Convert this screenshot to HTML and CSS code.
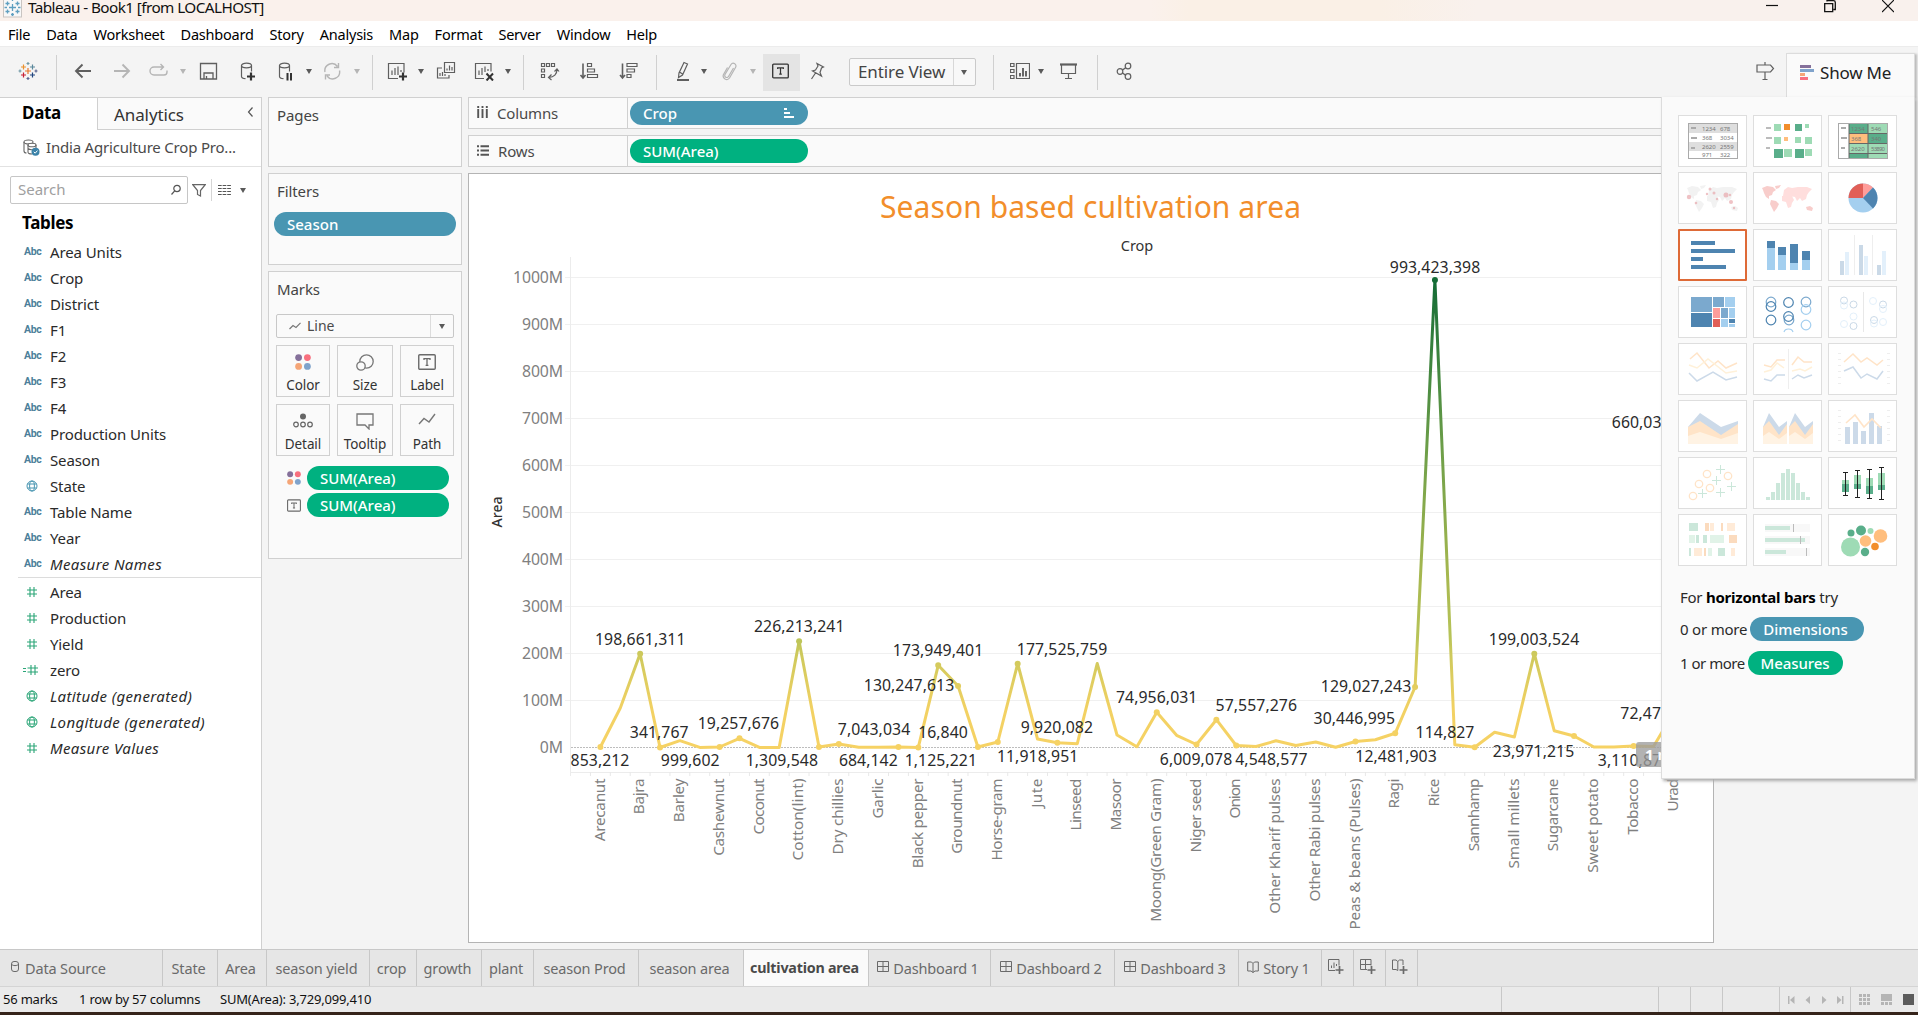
FILE: index.html
```html
<!DOCTYPE html>
<html lang="en">
<head>
<meta charset="utf-8">
<title>Tableau - Book1</title>
<link rel="stylesheet" href="styles.css">
</head>
<body>
<svg class="defs" width="0" height="0">
  <symbol id="caret" viewBox="0 0 8 20"><path d="M1 8h6l-3 5z" fill="currentColor"/></symbol>
  <symbol id="globe" viewBox="0 0 12 12"><g fill="none" stroke="currentColor"><circle cx="6" cy="6" r="5"/><ellipse cx="6" cy="6" rx="2.4" ry="5"/><path d="M1.5 4h9M1.5 8h9"/></g></symbol>
  <symbol id="hash" viewBox="0 0 12 12"><path d="M4 1v10M8 1v10M1 4h10M1 8h10" stroke="currentColor" stroke-width="1.1"/></symbol>
  <symbol id="dots4" viewBox="0 0 16 16"><circle cx="3.6" cy="3.6" r="3.4" fill="#85709a"/><circle cx="12.4" cy="3.6" r="3.4" fill="#f8707f"/><circle cx="3.6" cy="12.4" r="3.4" fill="#f5a577"/><circle cx="12.4" cy="12.4" r="3.4" fill="#80a3cb"/></symbol>
  <symbol id="tbox" viewBox="0 0 18 16"><rect x=".75" y=".75" width="16.5" height="14.5" rx="1" fill="none" stroke="currentColor" stroke-width="1.4"/><path d="M6 6V4.7h6V6M9 4.7v6.6M7.6 11.3h2.8" fill="none" stroke="currentColor" stroke-width="1.3"/></symbol>
  <symbol id="grid4" viewBox="0 0 12 12"><path d="M.5 .5h11v10h-11zM6 .5v10M.5 5.5h11" fill="none" stroke="currentColor"/></symbol>
  <symbol id="book" viewBox="0 0 12 12"><path d="M6 2.5L4.5 1H.7v9H4L6 11.5 8 10h3.300V1H7.500L6 2.500v9" fill="none" stroke="currentColor"/></symbol>
</svg>

<header class="titlebar">
  <svg class="appicon" width="20" height="20" viewBox="0 0 20 20"><rect x=".5" y="-3" width="18" height="20" fill="#f8f8f8" stroke="#c9c5c2"/><path d="M9.500 4v7M6 7.500h7M4.500 1.500v4M2.500 3.500h4M14.500 1.500v4M12.500 3.500h4M4.500 9.500v4M2.500 11.500h4M14.500 9.500v4M12.500 11.500h4M9.500 13v3M8 14.500h3M9.500-1v2M1.500 7.500h2.500M15 7.500h2.500" stroke="#5f9fc0" stroke-width="1.300"/></svg>
  <span class="wintitle">Tableau - Book1 [from LOCALHOST]</span>
  <div class="wincontrols">
    <svg width="12" height="14" viewBox="0 0 12 14"><path d="M0 5.500h12" stroke="#111" stroke-width="1.200"/></svg>
    <svg width="12" height="14" viewBox="0 0 12 14"><path d="M.7 3.700h8v8h-8zM3 1.500V.7h6.500a1.800 1.800 0 0 1 1.800 1.800V9.500H9.500" fill="none" stroke="#111" stroke-width="1.300"/></svg>
    <svg width="12" height="14" viewBox="0 0 12 14"><path d="M0 0l12 12M12 0L0 12" stroke="#111" stroke-width="1.200"/></svg>
  </div>
</header>

<nav class="menubar"><span>File</span><span>Data</span><span>Worksheet</span><span>Dashboard</span><span>Story</span><span>Analysis</span><span>Map</span><span>Format</span><span>Server</span><span>Window</span><span>Help</span></nav>

<div class="toolbar">
  <svg class="ic" viewBox="0 0 20 20" stroke-width="1.500"><path d="M10 7v6M7 10h6" stroke="#e8762c"/><path d="M5.500 3.500v5M3 6h5" stroke="#eb912c"/><path d="M14.500 3.500v5M12 6h5" stroke="#59879b"/><path d="M5.500 11.500v5M3 14h5" stroke="#c72035"/><path d="M14.500 11.500v5M12 14h5" stroke="#1f447e"/><path d="M10 1v3M8.500 2.500h3" stroke="#7199a6"/><path d="M10 16v3M8.500 17.500h3" stroke="#5b6591"/><path d="M2 8.500v3M.5 10h3" stroke="#7199a6"/><path d="M18 8.500v3M16.500 10h3" stroke="#5b6591"/></svg>
  <i class="sep g18"></i>
  <svg class="ic g16" viewBox="0 0 20 20"><path d="M18 10H3M9.500 3.500L3 10l6.500 6.500" stroke-width="1.900"/></svg>
  <svg class="ic g19 off" viewBox="0 0 20 20"><path d="M2 10h15M10.500 3.500L17 10l-6.500 6.500" stroke-width="1.900"/></svg>
  <svg class="ic g17 off" viewBox="0 0 20 20"><path d="M14 6H5a3.800 3.800 0 0 0 0 8h10a3 3 0 0 0 3-3V9.500M11.500 3l3 3-3 3" stroke-width="1.400"/></svg>
  <svg class="caret g10 off"><use href="#caret"/></svg>
  <svg class="ic g11" viewBox="0 0 20 20"><path d="M2.500 2.500h16v15.500h-16zM6 18v-6h9v6M8.500 18v-3" stroke-width="1.300"/></svg>
  <svg class="ic g20" viewBox="0 0 20 20"><ellipse cx="8.500" cy="4.500" rx="5" ry="2.300"/><path d="M3.500 4.500v11c0 1 1.500 2 4 2.200M13.500 4.500v6"/><path d="M13 11.500v8M9 15.500h8" stroke="#333" stroke-width="2.200"/></svg>
  <svg class="ic g17" viewBox="0 0 20 20"><ellipse cx="9.500" cy="4.500" rx="5" ry="2.300"/><path d="M4.500 4.500v11c0 1 1.500 2 4 2.200M14.500 4.500v6"/><path d="M12.500 12v7.500M16 12v7.500" stroke="#333" stroke-width="2"/></svg>
  <svg class="caret g10"><use href="#caret"/></svg>
  <svg class="ic g9 off" viewBox="0 0 20 20"><path d="M3 11a7 7 0 0 1 12.500-5.500M17.500 9.500A7 7 0 0 1 5 15M16.500 2v4.500H12M3.500 18.500V14H8" stroke-width="1.400"/></svg>
  <svg class="caret g11 off"><use href="#caret"/></svg>
  <i class="sep g11"></i>
  <svg class="ic g14" viewBox="0 0 20 20"><path d="M11 17.500H1.500v-15H17v9M5 14V9.500M8 14V7M11 14V5.500M14 11V9"/><path d="M16 11.500v8M12 15.500h8" stroke="#333" stroke-width="2.200"/></svg>
  <svg class="caret g10"><use href="#caret"/></svg>
  <svg class="ic g11" viewBox="0 0 20 20"><path d="M8.500 1.500h10v10h-10zM11 9.500V7.500M13.500 9.500V4.500M16 9.500V6M6 7H1.500v10H13v-3M4 15v-3M6.500 15v-4M9 15v-2"/></svg>
  <svg class="ic g18" viewBox="0 0 20 20"><path d="M10 17.500H1.500v-15H17v8M5 14V9.500M8 14V7M11 11V5.500M14 10V8"/><path d="M12.500 12.500l6.500 7M19 12.500l-6.500 7" stroke="#333" stroke-width="2"/></svg>
  <svg class="caret g10"><use href="#caret"/></svg>
  <i class="sep g11"></i>
  <svg class="ic g16" viewBox="0 0 20 20"><path d="M1.500 2.500h3v3h-3zM6.500 2.500h3v3h-3zM11.500 2.500h3v3h-3zM1.500 8h3v3h-3zM1.500 13.500h3v3h-3zM17 8.500c0 4.500-3 8-8 8M14.500 10.500l2.500-2.500 2 2.500M11.500 13.500l-3 3 3 2.500"/></svg>
  <svg class="ic g19" viewBox="0 0 20 20"><path d="M4 2.500V17M1.500 14L4 17l2.500-3" stroke-width="1.600"/><path d="M8.500 2.500h4v3h-4zM8.500 8h7v3h-7zM8.500 13.500h10v3h-10z"/></svg>
  <svg class="ic g20" viewBox="0 0 20 20"><path d="M3.500 2.500V17M1 14l2.500 3L6 14" stroke-width="1.600"/><path d="M8 2.500h10v3H8zM8 8h7.500v3H8zM8 13.500h4v3H8z"/></svg>
  <i class="sep g17"></i>
  <svg class="ic g16" viewBox="0 0 20 20"><path d="M11 1.500l3.500 1.500-5 11-4 2.500.5-4.500zM6.500 11l3 2"/><path d="M4 19h12" stroke-width="2"/></svg>
  <svg class="caret g7"><use href="#caret"/></svg>
  <svg class="ic g11 off" viewBox="0 0 20 20"><path d="M14.500 7l-5 8.500a2 2 0 0 1-3.500-2l6-10a2.700 2.700 0 0 1 4.500 3l-6 10.500a3.500 3.500 0 0 1-6-3.500l4-7"/></svg>
  <svg class="caret g10 off"><use href="#caret"/></svg>
  <span class="pressed g6"><svg width="17" height="16"><use href="#tbox"/></svg></span>
  <svg class="ic g7" viewBox="0 0 20 20"><path d="M10 2.500l6.500 3.500-2 1-1.500 4.500 1.500 3.500-9-5 3-1 2.500-4zM8.500 12L4.500 18"/></svg>
  <div class="combo g22"><span>Entire View</span><b><svg class="caret"><use href="#caret"/></svg></b></div>
  <i class="sep g17"></i>
  <svg class="ic g16" viewBox="0 0 20 20"><path d="M.5 2.500h3.500v3H.5zM.5 8.500h3.500v3H.5zM.5 14.500h3.500v3H.5zM6.500 2.500h13v15h-13z"/><path d="M10 15.500v-3.500M13 15.500V7M16 15.500V10" stroke-width="1.900"/></svg>
  <svg class="caret g7"><use href="#caret"/></svg>
  <svg class="ic g13" viewBox="0 0 20 20"><path d="M2 3.500h17" stroke-width="2.200"/><path d="M3.500 4v8.500h14V4M10.500 12.500v5M7 17.500h7"/></svg>
  <i class="sep g19"></i>
  <svg class="ic g16" viewBox="0 0 20 20"><circle cx="6" cy="10.500" r="2.800"/><circle cx="14" cy="5" r="2.800"/><circle cx="14" cy="15.500" r="2.800"/><path d="M8.500 9L12 6.500M8.500 12l3.500 2.500" stroke-width="1.500"/></svg>
  <svg class="ic guide" viewBox="0 0 20 20"><path d="M10 1v3M2 4h13.500l3 3.500-3 3.500H2zM10 11v7.500M7.500 18.500h5"/></svg>
  <div class="showtab">
    <svg width="15" height="16" viewBox="0 0 15 16"><path d="M0 0h11v3H0z" fill="#85709a"/><path d="M0 4h14v3H0z" fill="#80a3cb"/><path d="M0 8h5v3H0z" fill="#f5a577"/><path d="M0 12h8v3H0z" fill="#f8707f"/></svg>
    <span>Show Me</span>
  </div>
</div>

<main class="main">
  <aside class="sidebar">
    <div class="tabs"><b>Data</b><span>Analytics<svg width="7" height="10" viewBox="0 0 7 10"><path d="M5.500 .5L1.500 5l4 4.500" fill="none" stroke="#555" stroke-width="1.200"/></svg></span></div>
    <div class="source"><svg width="17" height="17" viewBox="0 0 17 17"><g fill="none" stroke="#666" stroke-width="1.100"><ellipse cx="5.500" cy="3" rx="4.500" ry="2"/><path d="M1 3v9c0 1 1 2 2.500 2"/><ellipse cx="9" cy="6" rx="4" ry="1.800" fill="#fff"/><path d="M5 6v7c0 1 1.500 2 4 2M13 6v3M5 9.500c1 1 3 1.500 5 1.200"/></g><circle cx="12.500" cy="12.800" r="4" fill="#3b82a8"/><path d="M10.800 12.800l1.400 1.400 2.200-2.600" fill="none" stroke="#fff"/></svg><span>India Agriculture Crop Pro...</span></div>
    <div class="searchrow">
      <div class="search"><span>Search</span><svg width="12" height="12" viewBox="0 0 12 12"><g fill="none" stroke="#555" stroke-width="1.200"><circle cx="7" cy="4.500" r="3.200"/><path d="M4.700 6.800L1.500 10.500"/></g></svg></div>
      <svg width="14" height="13" viewBox="0 0 14 13"><path d="M.8 .7h12.400L8.500 6.500v5.500l-3-1.500v-4z" fill="none" stroke="#666" stroke-width="1.200"/></svg>
      <i></i>
      <svg width="13" height="11" viewBox="0 0 13 11"><path d="M0 .5h13M0 3.500h13M0 6.500h13M0 9.500h13" stroke="#555" stroke-width="1.200" stroke-dasharray="3.700 .9"/></svg>
      <svg class="caret"><use href="#caret"/></svg>
    </div>
    <h2 class="tables">Tables</h2>
    <ul class="fields dim">
      <li><em>Abc</em>Area Units</li><li><em>Abc</em>Crop</li><li><em>Abc</em>District</li><li><em>Abc</em>F1</li><li><em>Abc</em>F2</li><li><em>Abc</em>F3</li><li><em>Abc</em>F4</li><li><em>Abc</em>Production Units</li><li><em>Abc</em>Season</li><li><em><svg width="12" height="12"><use href="#globe"/></svg></em>State</li><li><em>Abc</em>Table Name</li><li><em>Abc</em>Year</li><li class="gen"><em>Abc</em>Measure Names</li>
    </ul>
    <ul class="fields mea">
      <li><em><svg width="12" height="12"><use href="#hash"/></svg></em>Area</li><li><em><svg width="12" height="12"><use href="#hash"/></svg></em>Production</li><li><em><svg width="12" height="12"><use href="#hash"/></svg></em>Yield</li><li><em class="calc"><svg width="16" height="12" viewBox="0 0 16 12"><path d="M0 4.500h3M0 7.500h3M8 1v10M12 1v10M4.500 4H15M4.500 8H15" stroke="currentColor" stroke-width="1.100"/></svg></em>zero</li><li class="gen"><em><svg width="12" height="12"><use href="#globe"/></svg></em>Latitude (generated)</li><li class="gen"><em><svg width="12" height="12"><use href="#globe"/></svg></em>Longitude (generated)</li><li class="gen"><em><svg width="12" height="12"><use href="#hash"/></svg></em>Measure Values</li>
    </ul>
  </aside>

  <section class="cards">
    <div class="card pages"><h3>Pages</h3></div>
    <div class="card filters"><h3>Filters</h3><div class="pill blue">Season</div></div>
    <div class="card marks"><h3>Marks</h3>
      <div class="marktype"><svg width="12" height="8" viewBox="0 0 12 8"><path d="M.5 7l3.500-3.500 3 2L11.500 .8" fill="none" stroke="#777" stroke-width="1.200"/></svg><span>Line</span><b><svg class="caret"><use href="#caret"/></svg></b></div>
      <div class="markgrid">
        <div><svg width="16" height="16"><use href="#dots4"/></svg>Color</div>
        <div><svg width="18" height="17" viewBox="0 0 18 17"><g fill="none" stroke="#777" stroke-width="1.300"><circle cx="10.500" cy="7.500" r="6.700"/><circle cx="5" cy="12" r="4.200" fill="#fafafa"/></g></svg>Size</div>
        <div><svg class="dk" width="18" height="16"><use href="#tbox"/></svg>Label</div>
        <div><svg width="20" height="15" viewBox="0 0 20 15"><circle cx="10" cy="3.500" r="3" fill="#666"/><g fill="none" stroke="#666" stroke-width="1.200"><circle cx="3" cy="11.500" r="2.300"/><circle cx="10" cy="11.500" r="2.300"/><circle cx="17" cy="11.500" r="2.300"/></g></svg>Detail</div>
        <div><svg width="18" height="17" viewBox="0 0 18 17"><path d="M1 1h16v11h-4v4l-4-4H1z" fill="none" stroke="#777" stroke-width="1.300"/></svg>Tooltip</div>
        <div><svg width="18" height="13" viewBox="0 0 18 13"><path d="M1 11l5-5.500 5 3.500 6-8" fill="none" stroke="#777" stroke-width="1.400"/></svg>Path</div>
      </div>
      <div class="enc"><svg width="14" height="14"><use href="#dots4"/></svg><div class="pill green">SUM(Area)</div></div>
      <div class="enc"><svg class="dk" width="14" height="13"><use href="#tbox"/></svg><div class="pill green">SUM(Area)</div></div>
    </div>
  </section>

  <section class="work">
    <div class="shelf"><label><svg width="11" height="12" viewBox="0 0 11 12"><path d="M1.200 0v2M5.500 0v2M9.800 0v2M1.200 3v9M5.500 3v9M9.800 3v9" stroke="#555" stroke-width="1.900"/></svg>Columns</label><div class="pill blue">Crop<svg width="10" height="10" viewBox="0 0 10 10"><path d="M0 1h3M0 5h6M0 9h10" stroke="#fff" stroke-width="1.800"/></svg></div></div>
    <div class="shelf"><label><svg width="12" height="11" viewBox="0 0 12 11"><path d="M0 1.200h2M0 5.500h2M0 9.800h2M3.500 1.200H12M3.500 5.500H12M3.500 9.800H12" stroke="#555" stroke-width="1.900"/></svg>Rows</label><div class="pill green">SUM(Area)</div></div>
    <svg class="view" id="chart" width="1246" height="770" viewBox="468 173 1246 770">
      <defs><linearGradient id="areaScale" gradientUnits="userSpaceOnUse" x1="0" y1="747" x2="0" y2="280"><stop offset="0" stop-color="#f6d264"/><stop offset=".08" stop-color="#f2d163"/><stop offset=".2" stop-color="#cdc95c"/><stop offset=".24" stop-color="#b6c358"/><stop offset=".35" stop-color="#a9b950"/><stop offset=".65" stop-color="#6a9d48"/><stop offset="1" stop-color="#146c36"/></linearGradient></defs>
      <text class="ctitle" x="880" y="217.500" textLength="421">Season based cultivation area</text>
      <text class="chead" x="1137" y="251" text-anchor="middle">Crop</text>
      <text class="caxis" transform="translate(502 512) rotate(-90)" text-anchor="middle">Area</text>
    </svg>
  </section>

  <aside class="showme">
    <div class="thumbs">
      <svg viewBox="0 0 69 52"><rect x="10.500" y="8.500" width="49" height="35" fill="#fff" stroke="#aaa"/><path d="M11 9h48v9H11zM11 27h48v9H11z" fill="#dedede"/><path d="M13 13h5M13 23h6M13 33h4" stroke="#aaa" stroke-width="2"/><g class="tiny"><text x="24" y="16">1234</text><text x="42" y="16">678</text><text x="24" y="25">368</text><text x="42" y="25">3034</text><text x="24" y="34">2620</text><text x="42" y="34">2559</text><text x="24" y="42">971</text><text x="42" y="42">322</text></g></svg>
      <svg viewBox="0 0 69 52"><path d="M13 13h5M13 23h6M13 33h4" stroke="#bbb" stroke-width="2"/><path d="M21 9h7v7h-7zM52 9h4v4h-4zM21 22h7v7h-7zM42 22h6v6h-6zM52 22h7v7h-7zM31 34h8v8h-8zM52 34h7v7h-7z" fill="#9edbb5"/><path d="M42 9h7v7h-7zM21 34h9v9h-9zM42 34h9v9h-9z" fill="#59ae8a"/><path d="M31 9h6v6h-6z" fill="#f28e2b"/><path d="M31 22h4v4h-4z" fill="#ffbe7d"/></svg>
      <svg viewBox="0 0 69 52"><rect x="10.500" y="8.500" width="49" height="35" fill="#fff" stroke="#aaa"/><path d="M21 9h19v9H21zM40 18h19v10H40zM21 38h19v5H21z" fill="#59ae8a"/><path d="M40 9h19v9H40zM21 28h38v10H21zM40 38h19v5H40z" fill="#9edbb5"/><path d="M21 18h19v10H21z" fill="#ffbe7d"/><path d="M21 9v34M40 9v34M21 18.500h38M21 28.500h38M21 38.500h38" stroke="#666"/><path d="M13 13h5M13 23h6M13 33h4" stroke="#aaa" stroke-width="2"/><g class="tiny"><text x="23" y="15.500">1234</text><text x="43" y="15.500">546</text><text x="23" y="26">368</text><text x="43" y="26">340</text><text x="23" y="36">2620</text><text x="43" y="36" textLength="14">53890</text></g></svg>
      <svg viewBox="0 0 69 52"><path d="M9 16l5-2 6 1 3 3-3 2-1 3-3 1v3l-3-2-2-4-1-3zM22 14l6-1-2 3-3 1zM18 28l5 1 3 3-2 4-3 4-2-4-2-4zM29 24l5-1 5 1 2 4-2 3-1 4-3 1-2-6-4-1zM31 18l4-3 4 1 6-1 9 0 5 2-3 3-2 3-1 4-4 2-2-3-3 3-2-4-5-1-4 1-3-1zM53 35l4-1 3 2-1 3-5-1z" fill="#f2f2f2"/><g fill="#e9a9ad" opacity=".7"><circle cx="11" cy="25" r="2.200"/><circle cx="18" cy="31" r="1.300"/><circle cx="29" cy="22" r="1.200"/><circle cx="32" cy="17" r="1.500"/><circle cx="36" cy="21" r="1.500"/><circle cx="48" cy="23" r="2.500"/><circle cx="53" cy="30" r="2"/><circle cx="39" cy="27" r="1.200"/><circle cx="56" cy="36" r="1.200"/><circle cx="52" cy="23" r="1.200"/></g></svg>
      <svg viewBox="0 0 69 52"><path d="M9 16l5-2 6 1 3 3-3 2-1 3-3 1v3l-3-2-2-4-1-3zM22 14l6-1-2 3-3 1zM18 28l5 1 3 3-2 4-3 4-2-4-2-4zM53 35l4-1 3 2-1 3-5-1z" fill="#f8cdcb"/><path d="M29 24l5-1 5 1 2 4-2 3-1 4-3 1-2-6-4-1zM31 18l4-3 4 1 6-1 9 0 5 2-3 3-2 3-1 4-4 2-2-3-3 3-2-4-5-1-4 1-3-1z" fill="#ffdedd"/></svg>
      <svg viewBox="0 0 69 52"><circle cx="35" cy="26" r="14.500" fill="#a4cfef"/><path d="M35 26V11.500A14.500 14.500 0 0 0 20.500 26z" fill="#e15f57"/><path d="M35 26V11.500a14.500 14.500 0 0 1 10 4z" fill="#ff9d9a"/><path d="M35 26l10-10.500a14.500 14.500 0 0 1 0 21z" fill="#4e84b0"/></svg>
      <svg class="sel" viewBox="0 0 69 52"><path d="M13 12h24v4H13zM13 20h44v4H13zM13 28h12v4H13zM13 36h35v4H13z" fill="#4e84b0"/></svg>
      <svg viewBox="0 0 69 52"><path d="M14 19h8v22h-8zM25 26h8v15h-8zM37 34h8v7h-8zM49 31h8v10h-8z" fill="#a4cfef"/><path d="M14 12h8v7h-8zM25 18h8v8h-8zM37 15h8v19h-8zM49 22h8v9h-8z" fill="#4e84b0"/></svg>
      <svg viewBox="0 0 69 52"><path d="M26.500 6v40M44.500 6v40" stroke="#eee"/><path d="M12 32h4v14h-4zM31 16h4v30h-4zM49 36h4v10h-4z" fill="#cad9e7"/><path d="M17 23h4v23h-4zM36 27h4v19h-4zM54 22h4v24h-4z" fill="#e3f0fb"/></svg>
      <svg viewBox="0 0 69 52"><path d="M13 11h21v15H13zM35 11h11v10H35zM43 22h7v10h-7z" fill="#7ba9ce"/><path d="M13 27h21v14H13zM51 33h6v4h-6z" fill="#4e84b0"/><path d="M47 11h10v10H47zM51 22h6v10h-6zM43 33h7v8h-7zM51 38h6v3h-6z" fill="#a4cfef"/><path d="M35 22h7v10h-7z" fill="#ff9d9a"/><path d="M35 33h7v8h-7z" fill="#e15f57"/></svg>
      <svg viewBox="0 0 69 52" fill="none" stroke-width="1.200"><g stroke="#7ba9ce"><circle cx="18" cy="16" r="4.800"/><circle cx="36" cy="34" r="4.800"/><circle cx="53" cy="16" r="4.800"/></g><g stroke="#4e84b0"><circle cx="18" cy="20.500" r="4.800"/><circle cx="18" cy="34" r="4.800"/><circle cx="35.500" cy="16.500" r="4.800"/><circle cx="35.500" cy="30.500" r="4.800"/></g><g stroke="#a4cfef"><circle cx="53" cy="23.500" r="4.800"/><circle cx="53" cy="39" r="4.800"/><path d="M31 46c1-4 8-4 9 0"/></g></svg>
      <svg viewBox="0 0 69 52" fill="none"><path d="M35.500 6v40" stroke="#e8e8e8"/><g stroke="#cad9e7"><circle cx="16" cy="14.500" r="3.500"/><circle cx="25.500" cy="18.500" r="3.500"/><circle cx="25.500" cy="40" r="3.500"/><circle cx="55" cy="18.500" r="3.500"/><circle cx="46" cy="34" r="3.500"/></g><g stroke="#e3f0fb"><circle cx="16" cy="19.500" r="3.500"/><circle cx="25.500" cy="30.500" r="3.500"/><circle cx="16" cy="38" r="3.500"/><circle cx="45" cy="15" r="3.500"/><circle cx="55" cy="23" r="3.500"/><circle cx="46" cy="37.500" r="3.500"/><circle cx="55" cy="36" r="3.500"/></g></svg>
      <svg viewBox="0 0 69 52" fill="none" stroke-width="1.500"><path d="M12 16l7-6 12 15 9-7 8 7 11-5" stroke="#ffe4c8"/><path d="M11 22l8 3 11-9 18 14 11-2" stroke="#fff1d9"/><path d="M11 30l8 8 16-9 13 8 11-3" stroke="#ccdae9"/></svg>
      <svg viewBox="0 0 69 52" fill="none" stroke-width="1.500"><path d="M35.500 6v40" stroke="#eee" stroke-width="1"/><path d="M11 22l7 2 6-7h8M39 22l6-8 6 5h8" stroke="#ffe4c8"/><path d="M11 29l7-2 6-7 7 5M39 28l8-2 5 2 7-4" stroke="#fff1d9"/><path d="M11 36l7 2 6-6h8M39 36l6-4 6 3 8-3" stroke="#ccdae9"/></svg>
      <svg viewBox="0 0 69 52" fill="none" stroke-width="1.500"><path d="M11.500 10v34M60.500 10v34" stroke="#eee" stroke-width="3" stroke-dasharray="1 5"/><path d="M16 19l9-8 8 8 6-4 10 7 6-5" stroke="#ffe4c8"/><path d="M16 28l9-4 8 11 6-4 10 5 6-8" stroke="#ccdae9"/></svg>
      <svg viewBox="0 0 69 52"><path d="M10 27l12-14 21 14 17-6v23H10z" fill="#ccdae9"/><path d="M10 27l12-6 21 14 17-11v20H10z" fill="#ffe4c8"/><path d="M10 36l12-4 21 7 17-6v11H10z" fill="#fff3e4"/></svg>
      <svg viewBox="0 0 69 52"><path d="M10 27l6-14 10 14 8-6v23H10zM36 27l6-14 10 14 8-6v23H36z" fill="#ccdae9"/><path d="M10 27l6-6 10 14 8-11v20H10zM36 27l6-6 10 14 8-11v20H36z" fill="#ffe4c8"/><path d="M10 36l6-4 10 7 8-6v11H10zM36 36l6-4 10 7 8-6v11H36z" fill="#fff3e4"/></svg>
      <svg viewBox="0 0 69 52" fill="none"><path d="M11.500 10v34M60.500 10v34" stroke="#eee" stroke-width="3" stroke-dasharray="1 5"/><path d="M17 27h5v17h-5zM25 22h5v22h-5zM33 31h5v13h-5zM41 13h5v31h-5zM49 26h5v18h-5z" fill="#ccdae9"/><path d="M18 23l9-8 9 12 8-8 9 9" stroke="#ffe4c8" stroke-width="1.600"/></svg>
      <svg viewBox="0 0 69 52" fill="none"><g stroke="#ffe4c8" stroke-width="1.300"><circle cx="15" cy="39" r="3.700"/><circle cx="21" cy="27" r="3.700"/><circle cx="29" cy="17" r="3.700"/><circle cx="32" cy="31" r="3.700"/><circle cx="50" cy="19" r="3.700"/></g><path d="M42.500 8v9M38 12.500h9M38.500 19v9M34 23.500h9M53.500 25v9M49 29.500h9M42.500 31v9M38 35.500h9M24.500 32v9M20 36.500h9" stroke="#cbe7da"/></svg>
      <svg viewBox="0 0 69 52"><path d="M13 40h4v3h-4zM18 35h4v8h-4zM23 26h4v17h-4zM28 16h4v27h-4zM33 12h4v31h-4zM38 16h4v27h-4zM43 26h4v17h-4zM48 35h4v8h-4zM53 40h4v3h-4z" fill="#cbe7da"/></svg>
      <svg viewBox="0 0 69 52"><path d="M14 23h7v4h-7zM26 18h7v9h-7zM38 21h7v8h-7zM50 16h7v12h-7z" fill="#9edbb5"/><path d="M14 27h7v8h-7zM26 27h7v5h-7zM38 29h7v8h-7zM50 28h7v5h-7z" fill="#59ae8a"/><path d="M17.500 15v24M15 15.500h5M15 38.500h5M29.500 13v27M27 13.500h5M27 40.500h5M41.500 12v30M39 12.500h5M39 41.500h5M53.500 10v32M51 10.500h5M51 42.500h5" stroke="#222"/></svg>
      <svg viewBox="0 0 69 52"><path d="M11 9h9v8h-9zM18 21h3v8h-3zM25 21h4v8h-4zM11 34h2v8h-2zM40 34h7v8h-7z" fill="#cbe7da"/><path d="M11 21h6v8h-6zM32 21h14v8H32zM30 34h4v8h-4z" fill="#e1f3e8"/><path d="M27 9h4v8h-4zM43 9h2v8h-2zM51 21h8v8h-8zM26 34h2v8h-2z" fill="#fbdbbe"/><path d="M32 9h4v8h-4zM49 9h8v8h-8zM16 34h8v8h-8zM53 34h4v8h-4z" fill="#ffebd8"/></svg>
      <svg viewBox="0 0 69 52"><path d="M12 10h45v8H12zM12 22h45v8H12zM12 34h45v8H12z" fill="#f8f8f8"/><path d="M12 12h25v4H12zM12 24h40v4H12zM12 36h21v4H12z" fill="#cbe7da"/><path d="M40.500 10v8M47.500 22v8M53.500 34v8" stroke="#bbb"/></svg>
      <svg viewBox="0 0 69 52"><g fill="#9edbb5"><circle cx="22.500" cy="33" r="9.500"/><circle cx="42.500" cy="17" r="3"/></g><g fill="#59ae8a"><circle cx="23" cy="19" r="3.500"/><circle cx="33" cy="16.500" r="5"/><circle cx="37" cy="38" r="4.200"/></g><g fill="#ffbe7d"><circle cx="52.500" cy="22" r="6.800"/><circle cx="37.500" cy="27" r="5.800"/></g><circle cx="47" cy="32.500" r="3.800" fill="#f28e2b"/></svg>
    </div>
    <p class="hint">For <b>horizontal bars</b> try</p>
    <p class="req">0 or more <span class="pill blue">Dimensions</span></p>
    <p class="req two">1 or more <span class="pill green">Measures</span></p>
  </aside>
</main>

<nav class="sheets">
  <span class="t162 ds"><svg width="10" height="12" viewBox="0 0 10 12"><g fill="none" stroke="currentColor"><rect x="1.500" y=".5" width="7" height="10" rx="2.500"/><path d="M1.500 3.500c2 1.500 5 1.500 7 0"/></g></svg>Data Source</span><span class="t55">State</span><span class="t50">Area</span><span class="t102">season yield</span><span class="t47">crop</span><span class="t65">growth</span><span class="t52">plant</span><span class="t105">season Prod</span><span class="t105">season area</span><span class="t125 active">cultivation area</span><span class="t123"><svg width="12" height="12"><use href="#grid4"/></svg>Dashboard 1</span><span class="t124"><svg width="12" height="12"><use href="#grid4"/></svg>Dashboard 2</span><span class="t124"><svg width="12" height="12"><use href="#grid4"/></svg>Dashboard 3</span><span class="t83"><svg width="12" height="12"><use href="#book"/></svg>Story 1</span><span class="t32"><svg width="16" height="16" viewBox="0 0 16 16"><path d="M7 11.500H.5v-11H11v6M3.500 9V6.500M6 9V3.500M8.500 7V5" fill="none" stroke="currentColor"/><path d="M11.500 7v8M7.500 11h8" stroke="currentColor" stroke-width="1.700"/></svg></span><span class="t32"><svg width="16" height="16" viewBox="0 0 16 16"><path d="M7 10.500H.5V.5h10.500v6M.5 5.500H11M5.500 .5v10" fill="none" stroke="currentColor"/><path d="M11.500 7v8M7.500 11h8" stroke="currentColor" stroke-width="1.700"/></svg></span><span class="t32"><svg width="16" height="16" viewBox="0 0 16 16"><path d="M5.800 11.500L4 10.500H.5V1h3.500l1.800 1.500L7.500 1H11v5M5.800 2.500v9" fill="none" stroke="currentColor"/><path d="M11.500 7v8M7.500 11h8" stroke="currentColor" stroke-width="1.700"/></svg></span>
</nav>

<footer class="status">
  <span class="s1">56 marks</span><span class="s2">1 row by 57 columns</span><span class="s3">SUM(Area): 3,729,099,410</span>
  <div class="cells"><i class="c157"></i><i class="c32"></i><i class="c32"></i><i class="c57"></i>
    <i class="c71"><svg width="56" height="10" viewBox="0 0 56 10"><path d="M0 1h1.500v8H0zM6.500 1v8L2 5zM22 1v8l-4.500-4zM34 1v8l4.500-4zM49 1v8l4.500-4zM54 1h1.500v8H54z" fill="#b5b5b5"/></svg></i>
    <i class="c68"><svg width="56" height="12" viewBox="0 0 56 12"><path d="M0 0h3v3H0zM4 0h3v3H4zM8 0h3v3H8zM0 4h3v3H0zM4 4h3v3H4zM8 4h3v3H8zM0 8h3v3H0zM4 8h3v3H4zM8 8h3v3H8zM22 0h11v7H22zM22 8h3v3h-3zM26 8h3v3h-3zM30 8h3v3h-3z" fill="#b5b5b5"/><path d="M44 0h11v11H44z" fill="#5c5c5c"/></svg></i>
  </div>
</footer>
<div class="taskedge"></div>
<script src="chart.js"></script>
</body>
</html>
```
FILE: styles.css
```css
* { box-sizing: border-box; }
body { margin: 0; width: 1918px; height: 1015px; overflow: hidden; display: flex; flex-direction: column; background: #f4f4f4; color: #1a1a1a; font: 15px/1 "Noto Sans", "Open Sans", sans-serif; position: relative; }
svg { display: block; flex: none; }
.defs { position: absolute; }
h2, h3, p, ul { margin: 0; padding: 0; }
i { font-style: normal; }

.titlebar { height: 21px; flex: none; display: flex; align-items: flex-start; background: linear-gradient(90deg, #faf1ec 0 60%, #faf0e6 62% 72%, #f9f1ed 77%); padding-left: 3px; color: #111; }
.wintitle { margin-left: 5px; line-height: 14px; font-size: 15.3px; letter-spacing: -.58px; white-space: nowrap; }
.wincontrols { margin-left: auto; display: flex; gap: 46px; padding-right: 24px; }
.menubar { height: 25px; flex: none; background: #fff; display: flex; gap: 16px; padding-left: 8px; line-height: 27px; font-size: 14.5px; letter-spacing: -.23px; color: #000; }

.toolbar { height: 51px; flex: none; display: flex; align-items: center; padding-left: 18px; border-top: 1px solid #ececec; }
.ic { width: 20px; height: 20px; fill: none; stroke: #5f5f5f; stroke-width: 1.2; }
.off { stroke: #b5b5b5; color: #b5b5b5; }
.caret { width: 8px; height: 20px; color: #5a5a5a; stroke: none; }
.caret.off { color: #b5b5b5; stroke: none; }
.sep { width: 1px; height: 35px; background: #d0d0d0; }
.toolbar > .ic, .toolbar > .caret { margin-top: -2px; }
.g6 { margin-left: 6px; } .g7 { margin-left: 7px; } .g9 { margin-left: 9px; } .g10 { margin-left: 10px; } .g11 { margin-left: 11px; } .g13 { margin-left: 13px; } .g14 { margin-left: 14px; } .g16 { margin-left: 16px; } .g17 { margin-left: 17px; } .g18 { margin-left: 18px; } .g19 { margin-left: 19px; } .g20 { margin-left: 20px; } .g22 { margin-left: 22px; }
.pressed { width: 37px; height: 37px; background: #e4e4e4; display: flex; align-items: center; justify-content: center; padding: 0 2px 2px 0; color: #333; }
.combo { width: 127px; height: 28px; border: 1px solid #cacaca; border-radius: 2px; background: #f8f8f8; display: flex; font-size: 17px; letter-spacing: -.1px; line-height: 26px; color: #444; padding-left: 8px; }
.combo span { flex: 1; white-space: nowrap; }
.combo b { width: 22px; border-left: 1px solid #d8d8d8; padding: 3px 0 0 6px; }
.guide { margin-left: auto; }
.showtab { margin: 6px 3px 0 11px; width: 129px; height: 45px; background: #fafafa; border: 1px solid #dcdcdc; border-bottom: 0; display: flex; padding: 11px 0 0 13px; gap: 5px; font-size: 17px; color: #222; box-shadow: 2px 1px 2px #bbb; position: relative; }
.showtab span { line-height: 15px; white-space: nowrap; letter-spacing: -.2px; }

.main { height: 852px; flex: none; display: flex; gap: 6px; position: relative; }
.sidebar { width: 262px; flex: none; background: #fff; border-right: 1px solid #d0d0d0; border-top: 1px solid #d0d0d0; }
.tabs { display: flex; height: 32px; }
.tabs b { width: 97px; padding-left: 22px; font-size: 17px; line-height: 30px; color: #000; letter-spacing: -.3px; }
.tabs span { flex: 1; display: flex; align-items: center; justify-content: space-between; background: #fafafa; border-left: 1px solid #d0d0d0; border-bottom: 1px solid #d0d0d0; padding: 1px 7px 0 16px; font-size: 17px; letter-spacing: -.1px; color: #333; }
.tabs svg { margin-top: -5px; }
.source { height: 37px; border-bottom: 1px solid #e2e2e2; display: flex; align-items: center; padding: 0 0 2px 23px; gap: 6px; color: #4a4a4a; white-space: nowrap; letter-spacing: -.2px; }
.searchrow { display: flex; align-items: center; margin-top: 9px; padding-left: 10px; height: 28px; }
.search { width: 178px; height: 28px; border: 1px solid #c6c6c6; border-radius: 2px; display: flex; align-items: center; justify-content: space-between; padding: 0 5px 0 7px; color: #a0a0a0; margin-right: 4px; }
.search span { line-height: 22px; margin-top: -2px; }
.searchrow i { width: 1px; height: 22px; background: #d5d5d5; margin: 0 6px 0 5px; }
.searchrow .caret { margin-left: 8px; }
.tables { font-size: 17px; line-height: 37px; height: 36px; padding-left: 22px; color: #000; letter-spacing: -.3px; }
.fields { list-style: none; color: #2a2a2a; letter-spacing: -.12px; }
.fields li { height: 26px; line-height: 23px; padding-bottom: 2px; display: flex; align-items: center; white-space: nowrap; }
.fields em { width: 50px; padding-left: 24px; font: 700 10.5px/26px Roboto, sans-serif; letter-spacing: -.4px; }
.fields em svg { margin-left: 2px; }
.fields em.calc svg { margin-left: -1px; }
.fields .gen { font-style: italic; letter-spacing: .38px; }
.dim em { color: #4c7f9a; }
.dim em svg { color: #4996b2; }
.mea { border-top: 1px solid #dcdcdc; margin: -1px 0 0 18px; padding-top: 2px; }
.mea em { width: 32px; padding-left: 6px; color: #2aa577; }

.cards { width: 194px; flex: none; display: flex; flex-direction: column; gap: 6px; }
.card { border: 1px solid #d0d0d0; background: #fafafa; }
.card h3 { font-size: 15px; font-weight: 400; line-height: 34px; height: 36px; padding-left: 8px; color: #444; letter-spacing: -.1px; }
.pages { height: 70px; }
.filters { height: 92px; }
.marks { height: 288px; }
.pill { height: 24px; border-radius: 12px; color: #fff; line-height: 24px; padding-left: 13px; font-size: 15px; letter-spacing: 0; font-weight: 500; }
.blue { background: #4996b2; }
.green { background: #00b180; }
.filters .pill { width: 182px; margin: 2px 0 0 5px; }
.marktype { width: 178px; height: 24px; margin: 6px 0 0 7px; border: 1px solid #c8c8c8; border-radius: 2px; display: flex; align-items: center; padding-left: 12px; gap: 6px; font-size: 14px; color: #4a4a4a; }
.marktype b { margin-left: auto; width: 23px; height: 22px; border-left: 1px solid #dcdcdc; padding: 1px 0 0 7px; }
.markgrid { display: grid; grid-template-columns: 54px 56px 54px; grid-auto-rows: 52px; gap: 7px; margin: 7px 0 0 7px; font-size: 13.5px; color: #333; }
.markgrid div { border: 1px solid #d0d0d0; display: flex; flex-direction: column; align-items: center; justify-content: space-between; padding: 8px 0 3px; line-height: 15px; letter-spacing: -.1px; }
.dk { color: #6a6a6a; }
.enc { display: flex; align-items: center; padding-left: 18px; gap: 6px; margin-top: 3px; }
.markgrid + .enc { margin-top: 10px; }
.enc .pill { width: 142px; }

.work { flex: none; width: 1246px; display: flex; flex-direction: column; gap: 6px; }
.shelf { width: 1246px; height: 32px; border: 1px solid #d0d0d0; background: #fafafa; display: flex; align-items: center; }
.shelf label { width: 159px; height: 30px; display: flex; align-items: center; padding: 1px 0 0 8px; gap: 9px; border-right: 1px solid #d0d0d0; color: #4a4a4a; letter-spacing: -.15px; }
.shelf label svg { margin-top: -3px; }
.shelf .pill { width: 178px; margin-left: 2px; display: flex; justify-content: space-between; align-items: center; padding-right: 14px; }
.view { background: #fff; box-shadow: inset 0 0 0 1px #b4b4b4; }
.ctitle { font-size: 30px; fill: #f28e2b; }
.chead { font-size: 14.5px; fill: #333; }
.caxis { font-size: 14px; fill: #333; font-weight: 500; }
.tick { font-size: 15.800px; fill: #808080; letter-spacing: -.1px; }
.val { font-size: 15.800px; fill: #2a2a2a; }
.cat { font-size: 15.300px; fill: #808080; }
.badge { font-size: 15px; font-weight: 700; fill: #fff; }

.showme { position: absolute; left: 1661px; top: 0; width: 254px; height: 682px; background: #fafafa; border: 1px solid #dcdcdc; border-top: 0; box-shadow: 2px 2px 3px #aaa; padding: 18px 0 0 16px; }
.thumbs { display: grid; grid-template-columns: repeat(3, 69px); grid-auto-rows: 52px; gap: 5px 6px; }
.thumbs > svg { width: 69px; height: 52px; background: #fff; box-shadow: inset 0 0 0 1px #dedede; }
.thumbs > .sel { box-shadow: inset 0 0 0 2px #de6a37; border-radius: 1px; }
.tiny { font-size: 6px; fill: #777; }
.hint { margin: 20px 0 0 2px; line-height: 22px; letter-spacing: -.25px; white-space: nowrap; color: #2a2a2a; }
.hint b { color: #000; }
.req { margin: 9px 0 0 2px; height: 24px; line-height: 24px; display: flex; gap: 3px; white-space: nowrap; letter-spacing: -.2px; color: #2a2a2a; }
.req.two { margin-top: 10px; letter-spacing: -.5px; }
.req .pill { padding: 0 16px 0 13px; letter-spacing: 0; }
.req.two .pill { padding-right: 14px; letter-spacing: -.1px; }

.sheets { height: 37px; flex: none; background: #e6e6e6; border-top: 1px solid #c8c8c8; display: flex; color: #6a6a6a; font-size: 14.5px; letter-spacing: -.15px; }
.sheets span { flex: none; display: flex; align-items: center; justify-content: center; gap: 4px; border-right: 1px solid #c8c8c8; padding: 1px 3px 0 0; white-space: nowrap; }
.sheets svg { margin-top: -4px; }
.sheets .ds { justify-content: flex-start; padding-left: 10px; gap: 5px; }
.sheets .active { background: #fafafa; color: #4a4a4a; font-weight: 700; font-size: 14.3px; letter-spacing: -.22px; padding-bottom: 1px; }
.t162 { width: 163px; } .t55 { width: 55px; } .t50 { width: 49px; } .t102 { width: 103px; } .t47 { width: 47px; } .t65 { width: 65px; } .t52 { width: 52px; } .t105 { width: 105px; } .t125 { width: 125px; } .t123 { width: 122px; } .t124 { width: 124px; } .t83 { width: 83px; } .t32 { width: 32px; }
.status { height: 26px; flex: none; background: #eaeaea; border-top: 1px solid #d4d4d4; display: flex; align-items: center; font-size: 13px; padding-left: 3px; letter-spacing: -.2px; white-space: nowrap; color: #111; }
.s1 { width: 76px; } .s2 { width: 141px; }
.cells { margin-left: auto; display: flex; height: 25px; }
.cells i { border-left: 1px solid #c8c8c8; display: flex; align-items: center; padding-left: 8px; }
.c157 { width: 157px; } .c32 { width: 32px; } .c57 { width: 57px; } .c71 { width: 71px; } .c68 { width: 68px; }
.taskedge { height: 3px; flex: none; background: #35241a; }
```
FILE: chart.js
```js
const NS = "http://www.w3.org/2000/svg";
const chart = document.getElementById("chart");
const X0 = 600.4, STEP = 19.87;
const px = i => X0 + STEP * i;

function add(tag, attrs, text) {
  const el = document.createElementNS(NS, tag);
  for (const k in attrs) el.setAttribute(k, attrs[k]);
  if (text) el.textContent = text;
  chart.appendChild(el);
  return el;
}

// Value axis
for (let k = 0; k <= 10; k++) {
  const y = Math.round(747 - 47 * k) + 0.5;
  if (k) add("path", { d: `M565 ${y}H1713`, stroke: "#f0f0f0" });
  add("text", { class: "tick", x: 563, y: y + 5.5, "text-anchor": "end" }, k * 100 + "M");
}
add("path", { d: "M571 747.5H1713", stroke: "#bdbdbd", "stroke-dasharray": "2 1" });
add("path", { d: "M570.5 257V776M570 772.5H1713", stroke: "#ececec", fill: "none" });
for (let i = 0; i < 56; i++) add("path", { d: `M${px(i - 0.5)} 772v4`, stroke: "#e8e8e8" });

// Line and marks
const ys = [747, 708, 653.7, 747.5, 740.7, 747.4, 747, 738.3, 747.4, 747.4, 641.3, 747, 744, 747.3, 747.2, 747, 747.4, 665.3, 686, 747, 742, 663.7, 739, 742.7, 743.7, 663.5, 735, 746.7, 712.3, 735.3, 744.5, 719.7, 745.5, 746.5, 740.8, 745.5, 742, 747.3, 741.5, 739.7, 733.3, 687, 280, 744.7, 747.3, 732.3, 737, 653.7, 730.7, 736, 747, 747, 746, 746.6, 713];
add("path", {
  d: "M" + ys.map((y, i) => px(i).toFixed(1) + " " + y).join("L"),
  fill: "none", stroke: "url(#areaScale)", "stroke-width": 3, "stroke-linejoin": "round"
});
for (const i of [0, 2, 3, 6, 7, 10, 11, 12, 15, 16, 17, 18, 19, 20, 21, 23, 28, 30, 31, 32, 38, 40, 41, 42, 44, 47, 49, 52])
  add("path", { d: `M${px(i) - 3} ${ys[i]}a3 3 0 1 0 6 0a3 3 0 1 0-6 0`, fill: "url(#areaScale)" });

// Mark labels: centre x, baseline, text
const labels = [[640.2, 645, "198,661,311"], [659.2, 738, "341,767"], [738.4, 729, "19,257,676"], [799.2, 632, "226,213,241"], [600, 766, "853,212"], [690.2, 766, "999,602"], [781.8, 766, "1,309,548"], [868.3, 766, "684,142"], [874, 735, "7,043,034"], [943, 738, "16,840"], [940.8, 766, "1,125,221"], [909, 691, "130,247,613"], [938, 656, "173,949,401"], [1062, 655, "177,525,759"], [1056.8, 733, "9,920,082"], [1037.6, 762, "11,918,951"], [1156.7, 703, "74,956,031"], [1256.3, 711, "57,557,276"], [1196, 765, "6,009,078"], [1271.4, 765, "4,548,577"], [1366, 692, "129,027,243"], [1354.3, 724, "30,446,995"], [1396, 761.5, "12,481,903"], [1445, 738, "114,827"], [1533.5, 756.500, "23,971,215"], [1534, 645, "199,003,524"], [1634, 766, "3,110,875"], [1661, 719, "72,475,320"], [1435, 273, "993,423,398"], [1657, 428, "660,036,542"]];
for (const [x, y, t] of labels) {
  const commas = t.split(",").length - 1;
  add("text", { class: "val", x, y, "text-anchor": "middle", textLength: (t.length - commas) * 9.05 + commas * 4.5 }, t);
}

// Category labels: text, rendered length
const cats = [["Arecanut", 62.7], ["Bajra", 35.7], ["Barley", 43.7], ["Cashewnut", 77.3], ["Coconut", 56], ["Cotton(lint)", 82], ["Dry chillies", 76], ["Garlic", 40], ["Black pepper", 89.7], ["Groundnut", 75.3], ["Horse-gram", 82], ["Jute", 29.3], ["Linseed", 52], ["Masoor", 52], ["Moong(Green Gram)", 143.3], ["Niger seed", 74], ["Onion", 40], ["Other Kharif pulses", 135.3], ["Other Rabi pulses", 123], ["Peas & beans (Pulses)", 151], ["Ragi", 30], ["Rice", 28], ["Sannhamp", 72.7], ["Small millets", 90], ["Sugarcane", 72.7], ["Sweet potato", 94.3], ["Tobacco", 56.3], ["Urad", 33]];
cats.forEach(([t, len], n) =>
  add("text", { class: "cat", transform: `translate(${px(n * 2) + 4.2} ${778.5 + len}) rotate(-90)`, textLength: len }, t));

// Null-value indicator
add("rect", { x: 1636, y: 742, width: 60, height: 25, rx: 3, fill: "#9c9c9c", opacity: 0.78 });
add("text", { class: "badge", x: 1645, y: 760 }, "1 null");
```
